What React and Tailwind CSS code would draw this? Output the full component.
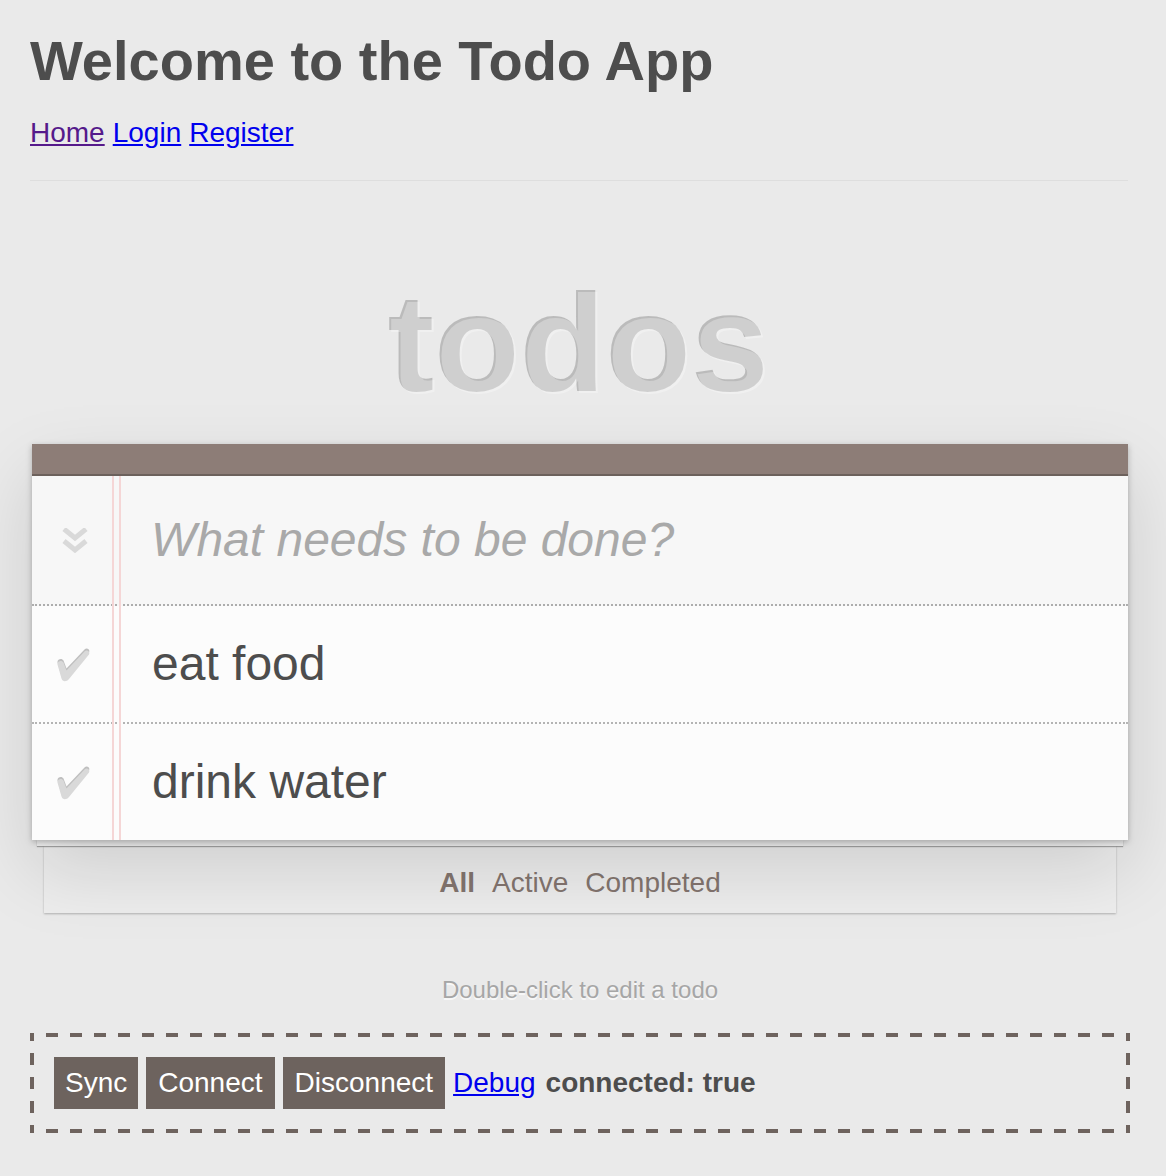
import React from 'react'

const todos = [
  { id: 1, title: 'eat food' },
  { id: 2, title: 'drink water' },
]

function ToggleAllIcon() {
  return (
    <svg width="26" height="25" viewBox="0 0 26 25" fill="none" stroke="#d9d9d9" strokeWidth="5">
      <polyline points="2,1 13,10 24,1" />
      <polyline points="2,13 13,22 24,13" />
    </svg>
  )
}

function CheckIcon() {
  const d = 'M1.5 14.5 C1 11 6 9.5 7.5 12.5 L10.5 20.5 L28.5 1.5 C30.5 -0.5 34.5 1 33 4.5 L13 29 C10.5 32 6.5 32 5.5 28.5 Z'
  return (
    <svg width="34" height="34" viewBox="0 -2 34 34">
      <path d={d} transform="translate(0 -2)" fill="#bfbfbf" />
      <path d={d} fill="#d9d9d9" />
    </svg>
  )
}

function TodoRow({ todo, last }) {
  return (
    <li className={`flex h-[116px] items-center bg-[#fcfcfc] ${last ? '' : 'border-b-2 border-dotted border-[#b4b4b4] box-content'}`}>
      <div className="flex w-[80px] justify-center pl-[2px] pt-[2px]">
        <CheckIcon />
      </div>
      <label className="pl-[40px] text-[48px] leading-[1.2] text-[#4d4d4d]">{todo.title}</label>
    </li>
  )
}

export default function App() {
  return (
    <div className="min-h-screen bg-[#eaeaea] font-['Liberation_Sans',Arial,sans-serif] text-[#4d4d4d]">
      <div className="ml-[30px] w-[1100px] pt-[33px] pb-[42px]">
        <h1 className="text-[56px] font-bold leading-none">Welcome to the Todo App</h1>
        <nav className="mt-[30px] flex gap-[8px] text-[28px] leading-none">
          <a href="#" className="text-[#551a8b] underline">Home</a>
          <a href="#" className="text-[#0000ee] underline">Login</a>
          <a href="#" className="text-[#0000ee] underline">Register</a>
        </nav>
        <div className="mt-[33px] mr-[2px] border-t border-[#dedede]" />

        <h2 className="mt-[94px] text-center text-[140px] font-bold leading-none text-[rgba(255,255,255,0.3)] [text-shadow:-2px_-2px_rgba(0,0,0,0.2)]">
          todos
        </h2>

        <section className="mt-[29px] mx-[2px]">
          <div className="relative z-10 bg-[#fcfcfc] shadow-[0_2px_6px_0_rgba(0,0,0,0.25),0_30px_70px_0_rgba(0,0,0,0.13)]">
            <div className="h-[30px] border-b-2 border-[#6c615c] bg-[#8d7d77] box-content" />
            <div className="flex h-[128px] items-center border-b-2 border-dotted border-[#adadad] bg-[#f7f7f7] box-content">
              <div className="flex w-[80px] justify-center pl-[11px]">
                <ToggleAllIcon />
              </div>
              <input
                className="w-full bg-transparent pl-[44px] text-[48px] italic leading-[1.4] text-[#4d4d4d] outline-none placeholder:text-[#a9a9a9]"
                placeholder="What needs to be done?"
              />
            </div>
            <ul>
              {todos.map((todo, i) => (
                <TodoRow key={todo.id} todo={todo} last={i === todos.length - 1} />
              ))}
            </ul>
            <div className="pointer-events-none absolute top-[32px] bottom-0 left-[80px] w-[9px] border-x-2 border-[#f5d6d6]" />
          </div>
          <div className="relative z-[5] mx-[5px] h-[6px] bg-[#f5f5f5] shadow-[0_1px_1px_rgba(0,0,0,0.3)]" />
          <footer className="mx-[12px] flex h-[67px] items-center justify-center gap-[17px] bg-[#ededed] pt-[7px] text-[28px] text-[#83756f] shadow-[0_1px_2px_rgba(0,0,0,0.25)]">
            <a href="#" className="font-bold">All</a>
            <a href="#">Active</a>
            <a href="#">Completed</a>
          </footer>
        </section>

        <p className="mt-[65px] text-center text-[24px] leading-none text-[#a6a6a6] [text-shadow:0_2px_0_rgba(255,255,255,0.7)]">
          Double-click to edit a todo
        </p>

        <div className="mt-[31px] flex items-center gap-[8px] bg-[repeating-linear-gradient(90deg,#6e635e_0_4px,transparent_4px_16px,#6e635e_16px_24px),repeating-linear-gradient(90deg,#6e635e_0_4px,transparent_4px_16px,#6e635e_16px_24px),repeating-linear-gradient(180deg,#6e635e_0_8px,transparent_8px_20px,#6e635e_20px_24px),repeating-linear-gradient(180deg,#6e635e_0_8px,transparent_8px_20px,#6e635e_20px_24px)] bg-no-repeat p-[24px] text-[28px] [background-position:0_0,0_100%,0_0,100%_0] [background-size:100%_4px,100%_4px,4px_100%,4px_100%]">
          <button className="flex h-[52px] items-center bg-[#6d635e] px-[11px] text-white">Sync</button>
          <button className="flex h-[52px] items-center bg-[#6d635e] px-[12px] text-white">Connect</button>
          <button className="flex h-[52px] items-center bg-[#6d635e] px-[12px] text-white">Disconnect</button>
          <a href="#" className="text-[#0000ee] underline">Debug</a>
          <span className="ml-[2px] font-bold">connected: true</span>
        </div>
      </div>
    </div>
  )
}
